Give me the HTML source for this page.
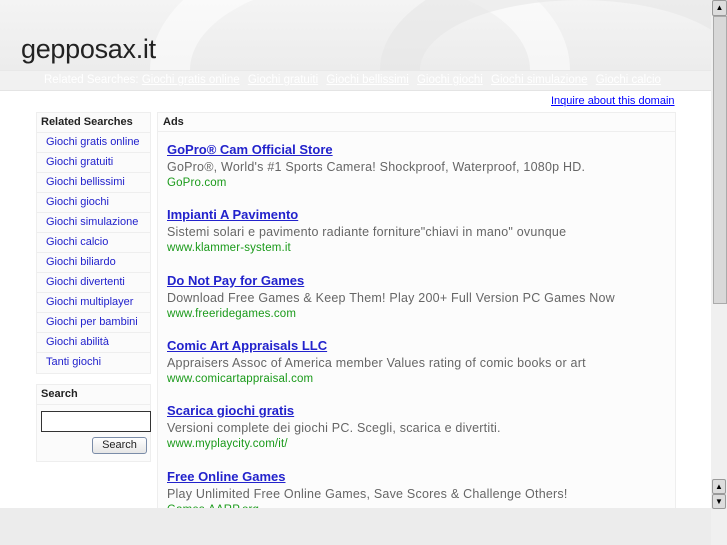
<!DOCTYPE html>
<html><head><style>
*{margin:0;padding:0;box-sizing:border-box}
body{width:727px;height:545px;overflow:hidden;background:#fff;font-family:"Liberation Sans",sans-serif;position:relative}
.hdr{position:absolute;left:0;top:0;width:711px;height:70px;background:linear-gradient(#f4f4f4,#ececec);overflow:hidden}
.hdr .sw{position:absolute;border-radius:50%;border:40px solid rgba(255,255,255,.5)}
.hdr h1{position:absolute;left:21px;top:34px;font-weight:normal;font-size:27px;color:#222;letter-spacing:-.3px}
.nav{position:absolute;left:0;top:70px;width:711px;height:21px;background:#f1f1f1;border-top:1px solid #e8e8e8;border-bottom:1px solid #e4e4e4;font-size:11.5px;color:#fff;padding:3px 0 0 44px;white-space:nowrap}
.nav a{color:#fff;text-decoration:underline;margin-right:5px}
.inq{position:absolute;left:551px;top:95px;font-size:11px;color:#00f;text-decoration:underline}
.lb{position:absolute;left:36px;width:115px;border:1px solid #eee;background:#fbfbfb}
.lb .h{font-size:11px;font-weight:bold;color:#222;padding:3px 4px;height:20px;border-bottom:1px solid #eee}
.lb .i{height:20px;font-size:11px;color:#22c;padding:3px 0 0 9px;border-bottom:1px solid #eee}
.cb{position:absolute;left:157px;top:112px;width:519px;height:400px;border:1px solid #eee;background:#fcfcfc}
.cb .h{height:19px;border-bottom:1px solid #eee;font-size:11px;font-weight:bold;padding:3px 5px;color:#222}
.ad{position:absolute;left:9px;white-space:nowrap}
.ad .t{font-size:13px;font-weight:bold;color:#22c;text-decoration:underline;height:18px}
.ad .d{font-size:12.5px;color:#666;height:17px;letter-spacing:.22px}
.ad .u{font-size:11.5px;color:#1a9a1a;letter-spacing:.15px}
.foot{position:absolute;left:0;top:508px;width:711px;height:37px;background:#ececec}
.sb{position:absolute;left:711px;top:0;width:16px;height:545px;background:#f0f0f0}
.btn{position:absolute;width:14px;height:15px;border:1px solid #999;border-radius:2px;background:#ddd;font-size:8px;text-align:center;line-height:13px}
</style></head><body>
<div class="hdr">
<div class="sw" style="left:150px;top:-60px;width:420px;height:260px"></div>
<div class="sw" style="left:380px;top:-40px;width:400px;height:220px;border-color:rgba(230,230,230,.6)"></div>
<h1>gepposax.it</h1></div>
<div class="nav">Related Searches: <a>Giochi gratis online</a> <a>Giochi gratuiti</a> <a>Giochi bellissimi</a> <a>Giochi giochi</a> <a>Giochi simulazione</a> <a>Giochi calcio</a></div>
<div class="inq">Inquire about this domain</div>
<div class="lb" style="top:112px">
<div class="h">Related Searches</div>
<div class="i">Giochi gratis online</div><div class="i">Giochi gratuiti</div><div class="i">Giochi bellissimi</div><div class="i">Giochi giochi</div><div class="i">Giochi simulazione</div><div class="i">Giochi calcio</div><div class="i">Giochi biliardo</div><div class="i">Giochi divertenti</div><div class="i">Giochi multiplayer</div><div class="i">Giochi per bambini</div><div class="i">Giochi abilità</div><div class="i" style="border:0">Tanti giochi</div>
</div>
<div class="lb" style="top:384px;height:78px">
<div class="h">Search</div>
<div style="margin:6px 0 0 4px;width:110px;height:21px;border:1px solid #333;background:#fff"></div>
<div style="margin:5px 0 0 55px;width:55px;height:17px;border:1px solid #7a8ca8;border-radius:3px;background:linear-gradient(#fff,#e6e6e6);font-size:11px;text-align:center;line-height:15px;color:#222">Search</div>
</div>
<div class="cb"><div class="h">Ads</div>
<div class="ad" style="top:29px"><div class="t">GoPro® Cam Official Store</div><div class="d">GoPro®, World's #1 Sports Camera! Shockproof, Waterproof, 1080p HD.</div><div class="u">GoPro.com</div></div>
<div class="ad" style="top:94px"><div class="t">Impianti A Pavimento</div><div class="d">Sistemi solari e pavimento radiante forniture"chiavi in mano" ovunque</div><div class="u">www.klammer-system.it</div></div>
<div class="ad" style="top:160px"><div class="t">Do Not Pay for Games</div><div class="d">Download Free Games &amp; Keep Them! Play 200+ Full Version PC Games Now</div><div class="u">www.freeridegames.com</div></div>
<div class="ad" style="top:225px"><div class="t">Comic Art Appraisals LLC</div><div class="d">Appraisers Assoc of America member Values rating of comic books or art</div><div class="u">www.comicartappraisal.com</div></div>
<div class="ad" style="top:290px"><div class="t">Scarica giochi gratis</div><div class="d">Versioni complete dei giochi PC. Scegli, scarica e divertiti.</div><div class="u">www.myplaycity.com/it/</div></div>
<div class="ad" style="top:356px"><div class="t">Free Online Games</div><div class="d">Play Unlimited Free Online Games, Save Scores &amp; Challenge Others!</div><div class="u">Games.AARP.org</div></div>
</div>
<div class="foot"></div>
<div class="sb">
<div class="btn" style="left:1px;top:0;width:15px;height:16px;line-height:14px">▲</div>
<div style="position:absolute;left:2px;top:16px;width:14px;height:288px;border:1px solid #aaa;background:#d8d8d8"></div>
</div>
<div class="btn" style="left:712px;top:479px">▲</div>
<div class="btn" style="left:712px;top:494px">▼</div>
</body></html>
